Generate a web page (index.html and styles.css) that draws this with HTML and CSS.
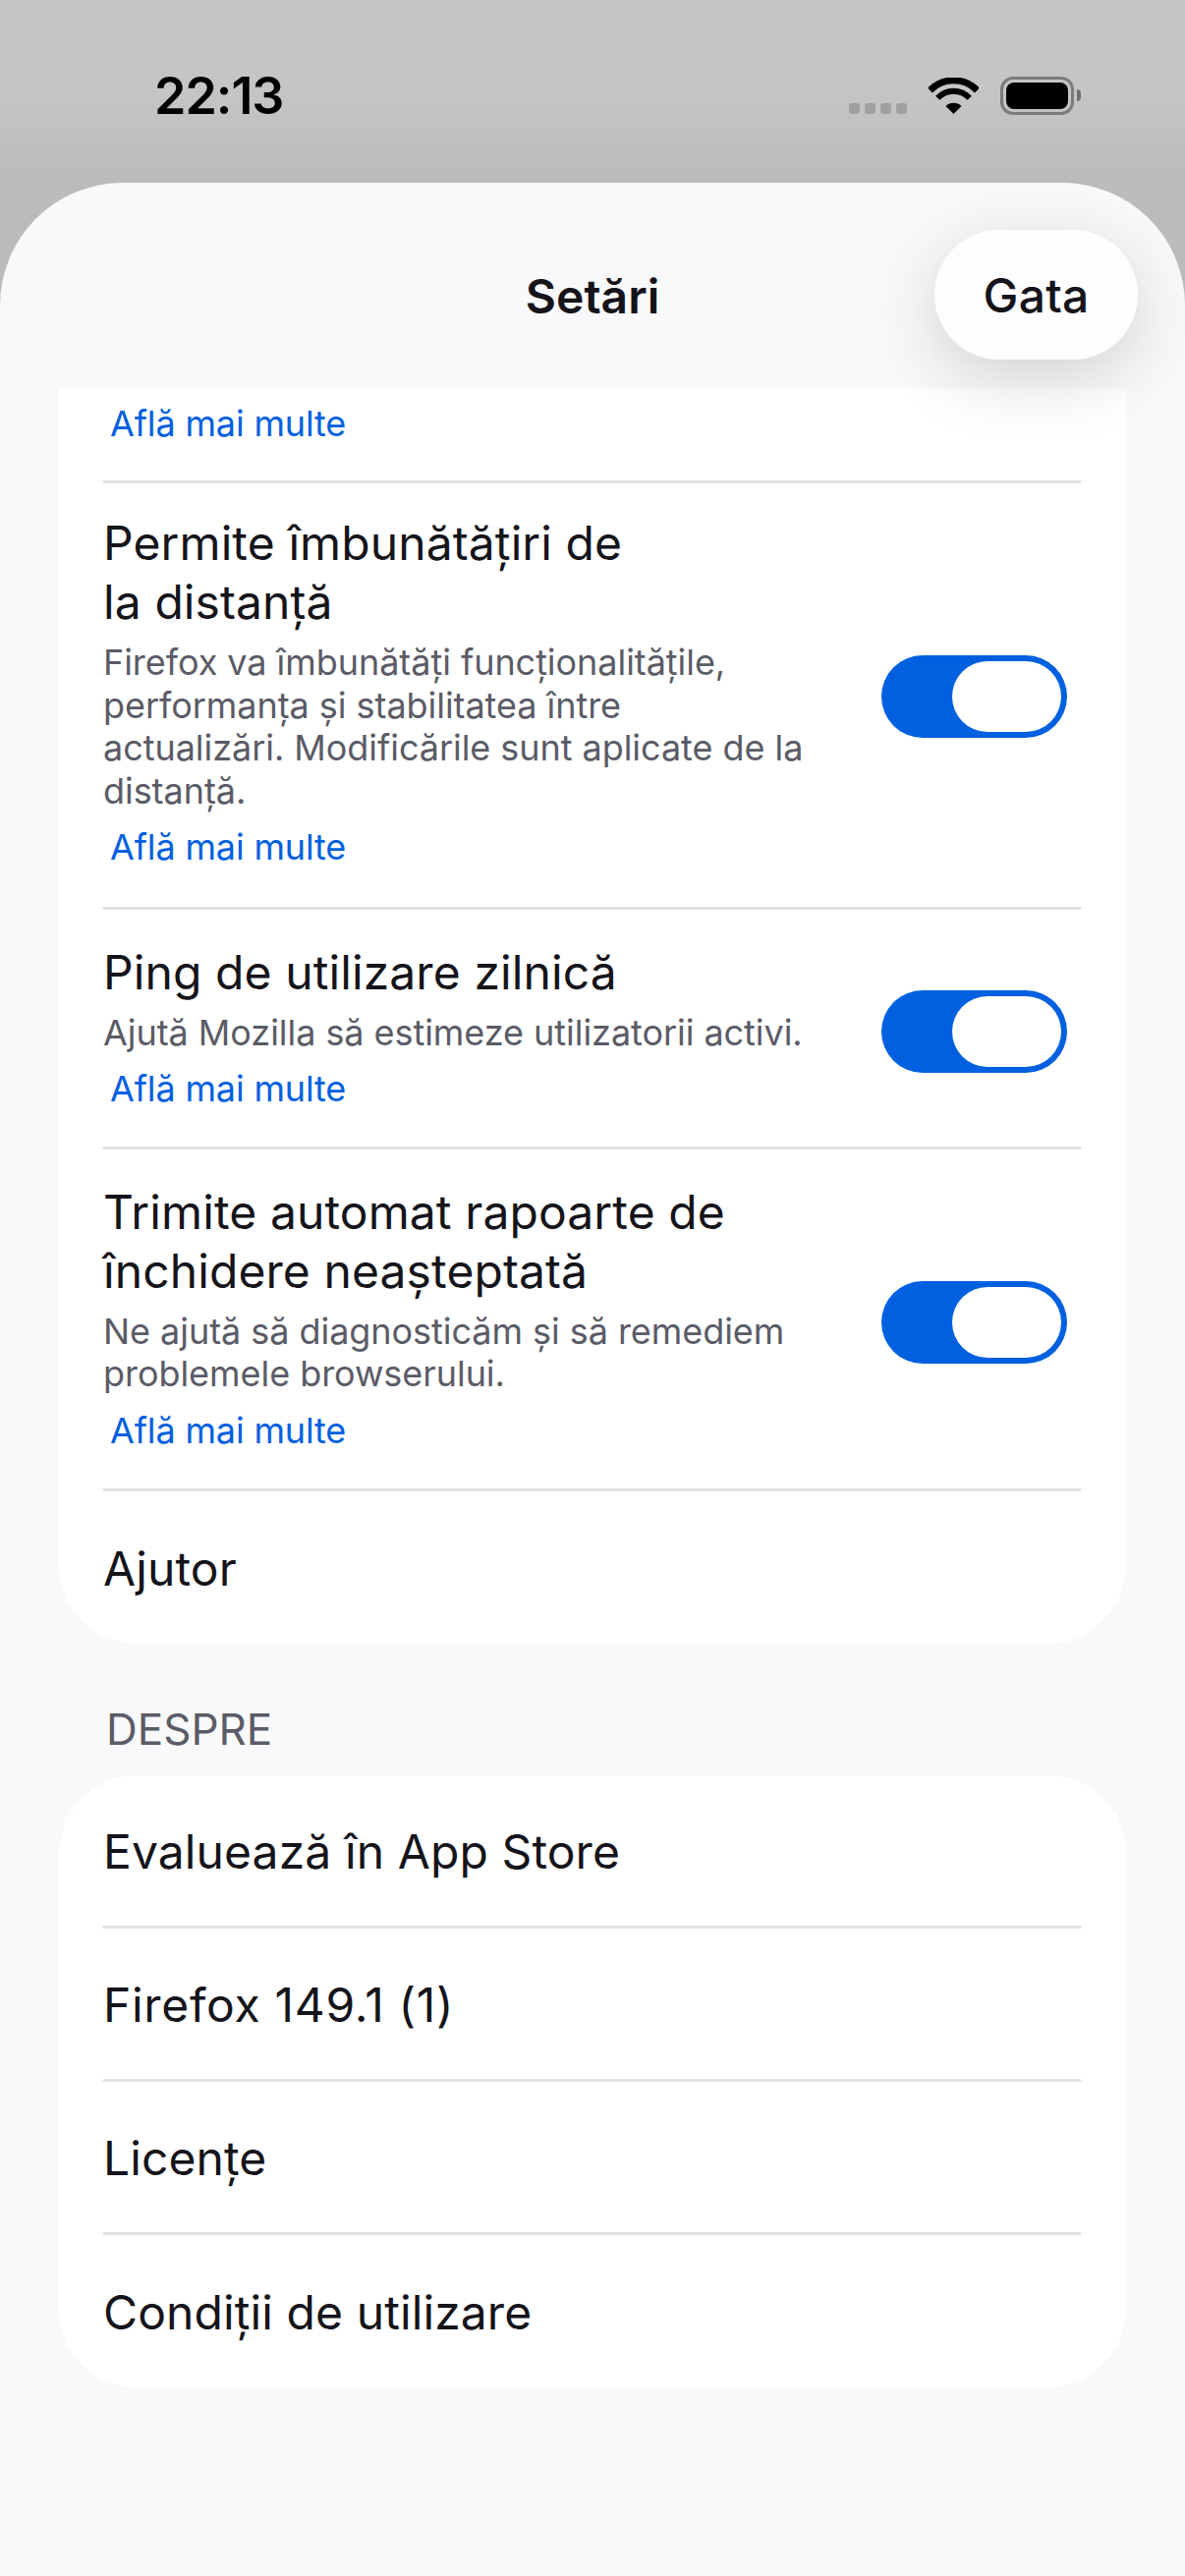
FILE: index.html
```html
<!DOCTYPE html>
<html lang="ro">
<head>
    <meta charset="UTF-8">
    <meta name="viewport" content="width=device-width, initial-scale=1">
    <title>Setări</title>
    <link rel="stylesheet" href="styles.css">
</head>
<body>
    <div class="status-bar">
        <span class="clock">22:13</span>
        <div class="status-icons">
            <div class="signal-dots"><i></i><i></i><i></i><i></i></div>
            <svg class="wifi" width="51" height="37" viewBox="0 0 51 37">
                <path d="M1.5 13 A33.5 33.5 0 0 1 49.5 13" fill="none" stroke="#000" stroke-width="7"/>
                <path d="M9.3 20.8 A22 22 0 0 1 41.7 20.8" fill="none" stroke="#000" stroke-width="6"/>
                <path d="M25.5 37 L17.5 29 A11.3 11.3 0 0 1 33.5 29 Z" fill="#000"/>
            </svg>
            <div class="battery"><div class="battery-level"></div></div>
            <div class="battery-nub"></div>
        </div>
    </div>

    <div class="sheet">
        <div class="sheet-header">
            <h1 class="sheet-title">Setări</h1>
            <button class="done-button">Gata</button>
        </div>

        <div class="card card-cut">
            <div class="row row-link-only">
                <a class="learn-more" href="#">Află mai multe</a>
            </div>
            <div class="row row-toggle row-remote">
                <div class="row-text">
                    <div class="row-title">Permite îmbunătățiri de<br>la distanță</div>
                    <div class="row-desc">Firefox va îmbunătăți funcționalitățile,<br>performanța și stabilitatea între<br>actualizări. Modificările sunt aplicate de la<br>distanță.</div>
                    <a class="learn-more" href="#">Află mai multe</a>
                </div>
                <div class="toggle"><div class="toggle-knob"></div></div>
            </div>
            <div class="row row-toggle">
                <div class="row-text">
                    <div class="row-title">Ping de utilizare zilnică</div>
                    <div class="row-desc">Ajută Mozilla să estimeze utilizatorii activi.</div>
                    <a class="learn-more" href="#">Află mai multe</a>
                </div>
                <div class="toggle"><div class="toggle-knob"></div></div>
            </div>
            <div class="row row-toggle">
                <div class="row-text">
                    <div class="row-title">Trimite automat rapoarte de<br>închidere neașteptată</div>
                    <div class="row-desc">Ne ajută să diagnosticăm și să remediem<br>problemele browserului.</div>
                    <a class="learn-more" href="#">Află mai multe</a>
                </div>
                <div class="toggle"><div class="toggle-knob"></div></div>
            </div>
            <div class="row row-plain">Ajutor</div>
        </div>

        <div class="section-label">DESPRE</div>

        <div class="card">
            <div class="row row-plain">Evaluează în App Store</div>
            <div class="row row-plain row-version">Firefox 149.1 (1)</div>
            <div class="row row-plain">Licențe</div>
            <div class="row row-plain">Condiții de utilizare</div>
        </div>
    </div>
</body>
</html>
```

FILE: styles.css
```css
html, body {
    margin: 0;
    height: 2622px;
    overflow: hidden;
}
body {
    display: flex;
    flex-direction: column;
    background: linear-gradient(#c5c5c7 90px, #bbbbbd 186px);
    font-family: Inter, "Noto Sans", sans-serif;
    color: #15141a;
}
.status-bar {
    height: 186px;
    flex-shrink: 0;
    display: flex;
    justify-content: space-between;
    padding: 59px 106px 0 157px;
    box-sizing: border-box;
}
.clock {
    font-size: 52px;
    line-height: 78px;
    height: 78px;
    font-weight: 600;
    color: #000;
    letter-spacing: -1px;
}
.status-icons {
    display: flex;
    align-items: flex-start;
    padding-top: 19px;
}
.signal-dots {
    display: flex;
    gap: 5px;
    margin-top: 27px;
    margin-right: 22px;
}
.signal-dots i {
    width: 11px;
    height: 11px;
    border-radius: 3px;
    background-color: #a0a0a2;
}
.wifi {
    margin-top: 1px;
    margin-right: 22px;
}
.battery {
    width: 75px;
    height: 39px;
    box-sizing: border-box;
    border: 3px solid #7b7b7d;
    border-radius: 13px;
    padding: 3px;
}
.battery-level {
    height: 100%;
    background-color: #000;
    border-radius: 8px;
}
.battery-nub {
    width: 4px;
    height: 12px;
    margin: 13px 0 0 3px;
    background-color: #6e6e70;
    border-radius: 0 6px 6px 0;
}
.sheet {
    flex: 1;
    background-color: #f9f9fb;
    border-radius: 125px 125px 0 0;
    overflow: hidden;
    position: relative;
}
.sheet-header {
    height: 210px;
    display: flex;
    align-items: center;
    justify-content: center;
}
.sheet-title {
    margin: 21px 0 0;
    font-size: 48px;
    line-height: 60px;
    font-weight: 600;
}
.done-button {
    position: absolute;
    top: 48px;
    right: 48px;
    width: 207px;
    height: 132px;
    border: 0;
    border-radius: 66px;
    background-color: #fdfdfe;
    box-shadow: 0 18px 70px rgba(0, 0, 0, 0.16);
    font-family: inherit;
    font-size: 48px;
    font-weight: 450;
    letter-spacing: 0.2px;
    color: #15141a;
    z-index: 2;
}
.card {
    margin: 0 60px;
    background-color: #fff;
    border-radius: 80px;
    padding: 0 46px 0 45px;
}
.card-cut {
    border-radius: 0 0 80px 80px;
}
.row {
    border-top: 3px solid #e0e0e6;
    box-sizing: border-box;
}
.row:first-child {
    border-top: 0;
}
.row-link-only {
    height: 93px;
    padding-top: 13px;
}
.row-toggle {
    display: flex;
    align-items: center;
    justify-content: space-between;
    padding: 33.5px 14px 37px 0;
}
.row-remote {
    padding-top: 31px;
    padding-bottom: 39px;
}
.row-plain {
    height: 156px;
    padding-top: 3px;
    display: flex;
    align-items: center;
    font-size: 48px;
    letter-spacing: 0.1px;
}
.row-plain:first-child {
    height: 153px;
}
.row-plain:last-child {
    height: 158px;
}
.row-version {
    letter-spacing: 0.7px;
}
.row-text {
    width: 800px;
}
.row-title {
    font-size: 48px;
    line-height: 60px;
    letter-spacing: 0.1px;
}
.row-desc {
    margin-top: 10px;
    font-size: 36px;
    line-height: 43.5px;
    letter-spacing: -0.05px;
    color: #5b5b66;
}
.learn-more {
    display: block;
    margin-top: 13px;
    padding-left: 7px;
    font-size: 36px;
    line-height: 44px;
    letter-spacing: -0.15px;
    color: #0060df;
    text-decoration: none;
}
.row-link-only .learn-more {
    margin-top: 0;
}
.toggle {
    width: 189px;
    height: 84px;
    margin-top: 10px;
    flex-shrink: 0;
    box-sizing: border-box;
    padding: 6px;
    display: flex;
    justify-content: flex-end;
    background-color: #0060df;
    border-radius: 42px;
}
.toggle-knob {
    width: 111px;
    height: 72px;
    background-color: #fff;
    border-radius: 36px;
}
.section-label {
    margin: 60px 0 0 108px;
    height: 74px;
    font-size: 44px;
    line-height: 54px;
    color: #5b5b66;
}
```
